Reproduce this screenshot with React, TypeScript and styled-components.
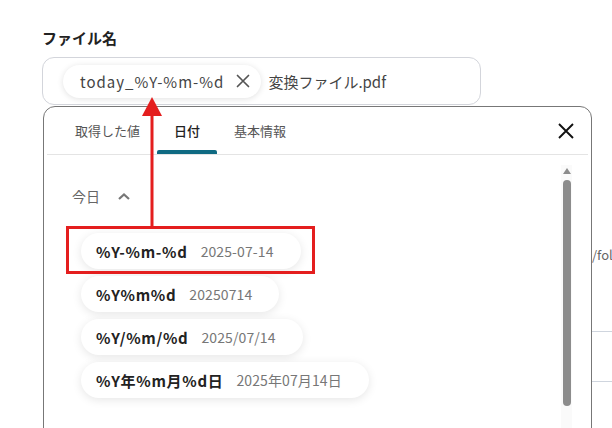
import { createGlobalStyle } from 'styled-components';
import styled from 'styled-components';

const GlobalStyle = createGlobalStyle`
	html, body {
		margin: 0;
		padding: 0;
		background: #ffffff;
		overflow: hidden;
	}
	body {
		font-family: 'Noto Sans CJK JP', 'Noto Sans', sans-serif;
		color: #333;
	}
`;

const Page = styled.div`
	position: relative;
	width: 612px;
	height: 428px;
	overflow: hidden;
	padding: 27px 0 0 42px;
	box-sizing: border-box;
`;

const Label = styled.div`
	font-size: 15px;
	font-weight: 700;
	color: #222;
	line-height: 22px;
	margin-bottom: 8px;
`;

const Field = styled.div`
	width: 439px;
	height: 48px;
	box-sizing: border-box;
	border: 1px solid #d3d5db;
	border-radius: 12px;
	display: flex;
	align-items: center;
	gap: 7px;
	padding-left: 20px;
`;

const Chip = styled.div`
	display: flex;
	align-items: center;
	gap: 12px;
	height: 33px;
	padding: 0 11px 0 17px;
	border-radius: 17px;
	background: #fff;
	box-shadow: 0 1px 6px rgba(0, 0, 0, 0.12);
	font-size: 15px;
	color: #444;
	letter-spacing: 1px;
`;

const FieldText = styled.span`
	font-size: 15px;
	color: #444;
`;

const Backdrop = styled.div`
	display: flex;
	flex-direction: column;
	margin-left: 550px;
	padding-top: 140px;
`;

const BackText = styled.div`
	font-size: 13px;
	color: #666;
	height: 20px;
	line-height: 20px;
`;

const BackRule = styled.div<{ $top: number }>`
	height: 1px;
	background: #cfd5de;
	margin-top: ${(p) => p.$top}px;
`;

const Panel = styled.div`
	position: absolute;
	left: 43px;
	top: 106px;
	width: 549px;
	height: 360px;
	box-sizing: border-box;
	border: 1px solid #777;
	border-radius: 12px;
	background: #fff;
	display: flex;
	flex-direction: column;
`;

const TabBar = styled.div`
	display: flex;
	align-items: stretch;
	height: 47px;
	padding: 0 14px 0 11px;
	border-bottom: 1px solid #e4e4e4;
	margin: 0 3px;
`;

const Tab = styled.div<{ $active?: boolean }>`
	position: relative;
	display: flex;
	align-items: center;
	padding: 0 17px;
	font-size: 13px;
	color: ${(p) => (p.$active ? '#222' : '#555')};
	font-weight: ${(p) => (p.$active ? 500 : 400)};
	&::after {
		content: '';
		display: ${(p) => (p.$active ? 'block' : 'none')};
		position: absolute;
		left: 0;
		right: 0;
		bottom: 0;
		height: 4px;
		border-radius: 2px 2px 0 0;
		background: #0f6a82;
	}
`;

const CloseButton = styled.button`
	margin-left: auto;
	border: none;
	background: none;
	padding: 0;
	display: flex;
	align-items: center;
	cursor: pointer;
`;

const Body = styled.div`
	flex: 1;
	display: flex;
	padding: 10px 19px 0 28px;
`;

const Content = styled.div`
	flex: 1;
	display: flex;
	flex-direction: column;
`;

const SectionHead = styled.div`
	display: flex;
	align-items: center;
	gap: 17px;
	margin-top: 20px;
	font-size: 14px;
	color: #666;
	height: 22px;
`;

const List = styled.div`
	display: flex;
	flex-direction: column;
	align-items: flex-start;
	gap: 7px;
	margin-top: 26px;
	padding-left: 9px;
`;

const Item = styled.div`
	display: flex;
	align-items: center;
	gap: 13px;
	height: 36px;
	padding: 0 27px 0 15px;
	border-radius: 18px;
	background: #fff;
	box-shadow: 0 2px 10px rgba(0, 0, 0, 0.1);
`;

const Format = styled.span`
	font-size: 15px;
	font-weight: 700;
	color: #222;
	letter-spacing: 0.7px;
`;

const Sample = styled.span`
	font-size: 14px;
	color: #777;
	letter-spacing: 0.1px;
`;

const ScrollTrack = styled.div`
	width: 11px;
	background: #fafafa;
	display: flex;
	flex-direction: column;
	align-items: center;
	padding-top: 3px;
	gap: 6px;
`;

const ScrollArrow = styled.div`
	width: 0;
	height: 0;
	border-left: 4px solid transparent;
	border-right: 4px solid transparent;
	border-bottom: 6px solid #8c8c8c;
`;

const ScrollThumb = styled.div`
	width: 8px;
	height: 226px;
	border-radius: 4px;
	background: #8c8c8c;
`;

const Highlight = styled.div`
	position: absolute;
	left: 66px;
	top: 226px;
	width: 249px;
	height: 48px;
	box-sizing: border-box;
	border: 3px solid #e41e1e;
	pointer-events: none;
`;

const Arrow = styled.svg`
	position: absolute;
	left: 141px;
	top: 96px;
	pointer-events: none;
`;

const items = [
	{ format: '%Y-%m-%d', sample: '2025-07-14' },
	{ format: '%Y%m%d', sample: '20250714' },
	{ format: '%Y/%m/%d', sample: '2025/07/14' },
	{ format: '%Y年%m月%d日', sample: '2025年07月14日' },
];

function App() {
	return (
		<>
			<GlobalStyle />
			<Page>
				<Label>ファイル名</Label>
				<Field>
					<Chip>
						today_%Y-%m-%d
						<svg width="14" height="14" viewBox="0 0 14 14">
							<path d="M1.5 1.5 L12.5 12.5 M12.5 1.5 L1.5 12.5" stroke="#555" strokeWidth="1.7" strokeLinecap="round" />
						</svg>
					</Chip>
					<FieldText>変換ファイル.pdf</FieldText>
				</Field>
				<Backdrop>
					<BackText>/folder</BackText>
					<BackRule $top={66} />
					<BackRule $top={49} />
				</Backdrop>

				<Panel>
					<TabBar>
						<Tab>取得した値</Tab>
						<Tab $active>日付</Tab>
						<Tab>基本情報</Tab>
						<CloseButton>
							<svg width="16" height="16" viewBox="0 0 16 16">
								<path d="M1 1 L15 15 M15 1 L1 15" stroke="#111" strokeWidth="1.9" />
							</svg>
						</CloseButton>
					</TabBar>
					<Body>
						<Content>
							<SectionHead>
								今日
								<svg width="14" height="9" viewBox="0 0 14 9">
									<path d="M2 7 L7 2.5 L12 7" stroke="#777" strokeWidth="2.2" fill="none" />
								</svg>
							</SectionHead>
							<List>
								{items.map((it) => (
									<Item key={it.format}>
										<Format>{it.format}</Format>
										<Sample>{it.sample}</Sample>
									</Item>
								))}
							</List>
						</Content>
						<ScrollTrack>
							<ScrollArrow />
							<ScrollThumb />
						</ScrollTrack>
					</Body>
				</Panel>

				<Highlight />
				<Arrow width="22" height="132" viewBox="0 0 22 132">
					<polygon points="11,1 1,20 21,20" fill="#e41e1e" />
					<rect x="9.5" y="18" width="3" height="114" fill="#e41e1e" />
				</Arrow>
			</Page>
		</>
	);
}

export default App;
